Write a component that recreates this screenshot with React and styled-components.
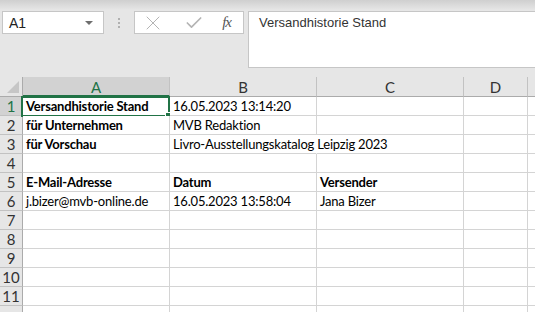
import React from 'react';
import styled, { createGlobalStyle } from 'styled-components';
import { X, Check } from 'lucide-react';

const GlobalStyle = createGlobalStyle`
  html, body {
    margin: 0;
    padding: 0;
    background: #e6e6e6;
    overflow: hidden;
  }
  body {
    font-family: 'Lato', 'Liberation Sans', sans-serif;
  }
`;

const Page = styled.div`
  width: 535px;
  height: 312px;
  overflow: hidden;
  background: linear-gradient(#cfcfcf 0px, #e6e6e6 10px, #e6e6e6 100%);
  display: flex;
  flex-direction: column;
`;

const FormulaRow = styled.div`
  display: flex;
  align-items: flex-start;
  padding: 11px 0 0 2px;
  height: 56px;
`;

const NameBox = styled.div`
  box-sizing: border-box;
  width: 102px;
  height: 23px;
  background: #fff;
  border: 1px solid #c6c6c6;
  display: flex;
  align-items: center;
  justify-content: space-between;
  padding: 0 10px 0 6px;
  font-family: 'Liberation Sans', sans-serif;
  font-size: 14px;
  color: #222;
`;

const Caret = styled.span`
  width: 0;
  height: 0;
  border-left: 4px solid transparent;
  border-right: 4px solid transparent;
  border-top: 4px solid #6e6e6e;
`;

const Dots = styled.div`
  width: 30px;
  height: 23px;
  display: flex;
  flex-direction: column;
  align-items: center;
  justify-content: center;
  gap: 2px;
  span {
    width: 2px;
    height: 2px;
    background: #b0b0b0;
  }
`;

const IconBox = styled.div`
  box-sizing: border-box;
  width: 110px;
  height: 23px;
  background: #fff;
  border: 1px solid #c6c6c6;
  display: flex;
  align-items: center;
  justify-content: space-between;
  padding: 0 10px 0 6px;
  color: #b4b4b4;
`;

const Fx = styled.span`
  font-family: 'Liberation Serif', serif;
  font-style: italic;
  font-size: 15px;
  color: #555;
  letter-spacing: -1px;
  padding-right: 2px;
`;

const FormulaInput = styled.div`
  box-sizing: border-box;
  margin-left: 4px;
  flex: 1;
  height: 57px;
  background: #fff;
  border: 1px solid #c6c6c6;
  border-right: none;
  padding: 3px 10px;
  font-family: 'Liberation Sans', sans-serif;
  font-size: 13px;
  color: #333;
`;

const Sheet = styled.div`
  margin-top: 10px;
  display: grid;
  grid-template-columns: 23px 147px 147px 147px 64px 40px;
  grid-auto-rows: 19px;
  grid-template-rows: 20px;
`;

const Corner = styled.div`
  position: relative;
  box-sizing: border-box;
  border-right: 1px solid #ababab;
  border-bottom: 1px solid #ababab;
  &::after {
    content: '';
    position: absolute;
    right: 3px;
    bottom: 3px;
    width: 0;
    height: 0;
    border-left: 12px solid transparent;
    border-bottom: 12px solid #c6c6c6;
  }
`;

const ColHead = styled.div`
  box-sizing: border-box;
  background: ${p => (p.$active ? '#d2d2d2' : '#e6e6e6')};
  border-right: 1px solid #c2c2c2;
  border-bottom: ${p => (p.$active ? '2px solid #217346' : '1px solid #ababab')};
  display: flex;
  align-items: center;
  justify-content: center;
  font-size: 15px;
  color: ${p => (p.$active ? '#217346' : '#333')};
  padding-top: 1px;
`;

const RowHead = styled.div`
  box-sizing: border-box;
  background: ${p => (p.$active ? '#d2d2d2' : '#e6e6e6')};
  border-right: 1px solid #ababab;
  border-bottom: 1px solid #c2c2c2;
  display: flex;
  align-items: center;
  justify-content: center;
  font-size: 15px;
  color: ${p => (p.$active ? '#217346' : '#333')};
`;

const Cell = styled.div`
  position: relative;
  box-sizing: border-box;
  background: #fff;
  border-right: 1px solid ${p => (p.$open ? '#fff' : '#d4d4d4')};
  border-bottom: 1px solid #d4d4d4;
  padding: 0 3px;
  font-size: 13px;
  letter-spacing: -0.2px;
  line-height: 18px;
  color: #000;
  font-weight: ${p => (p.$bold ? 700 : 400)};
  white-space: nowrap;
  overflow: visible;
  z-index: ${p => (p.$open ? 2 : 1)};
`;

const Selection = styled.div`
  position: absolute;
  left: -2px;
  top: -1px;
  right: -1px;
  bottom: -2px;
  border: 2px solid #217346;
  pointer-events: none;
  &::after {
    content: '';
    position: absolute;
    right: -4px;
    bottom: -4px;
    width: 5px;
    height: 5px;
    background: #217346;
    border: 1px solid #fff;
  }
`;

const columns = ['A', 'B', 'C', 'D', ''];

const rows = [
  [{ t: 'Versandhistorie Stand', b: true, sel: true }, { t: '16.05.2023 13:14:20' }],
  [{ t: 'für Unternehmen', b: true }, { t: 'MVB Redaktion' }],
  [{ t: 'für Vorschau', b: true }, { t: 'Livro-Ausstellungskatalog Leipzig 2023', open: true }],
  [],
  [{ t: 'E-Mail-Adresse', b: true }, { t: 'Datum', b: true }, { t: 'Versender', b: true }],
  [{ t: 'j.bizer@mvb-online.de' }, { t: '16.05.2023 13:58:04' }, { t: 'Jana Bizer' }],
  [], [], [], [], [], [],
];

const App = () => (
  <>
    <GlobalStyle />
    <Page>
      <FormulaRow>
        <NameBox>
          A1
          <Caret />
        </NameBox>
        <Dots>
          <span />
          <span />
          <span />
        </Dots>
        <IconBox>
          <X size={24} strokeWidth={1} />
          <Check size={20} strokeWidth={2} />
          <Fx>fx</Fx>
        </IconBox>
        <FormulaInput>Versandhistorie Stand</FormulaInput>
      </FormulaRow>
      <Sheet>
        <Corner />
        {columns.map((c, i) => (
          <ColHead key={i} $active={i === 0}>{c}</ColHead>
        ))}
        {rows.map((r, ri) => (
          <React.Fragment key={ri}>
            <RowHead $active={ri === 0}>{ri < 11 ? ri + 1 : ''}</RowHead>
            {columns.map((_, ci) => {
              const d = r[ci] || {};
              return (
                <Cell key={ci} $bold={d.b} $open={d.open}>
                  {d.t}
                  {d.sel && <Selection />}
                </Cell>
              );
            })}
          </React.Fragment>
        ))}
      </Sheet>
    </Page>
  </>
);

export default App;
